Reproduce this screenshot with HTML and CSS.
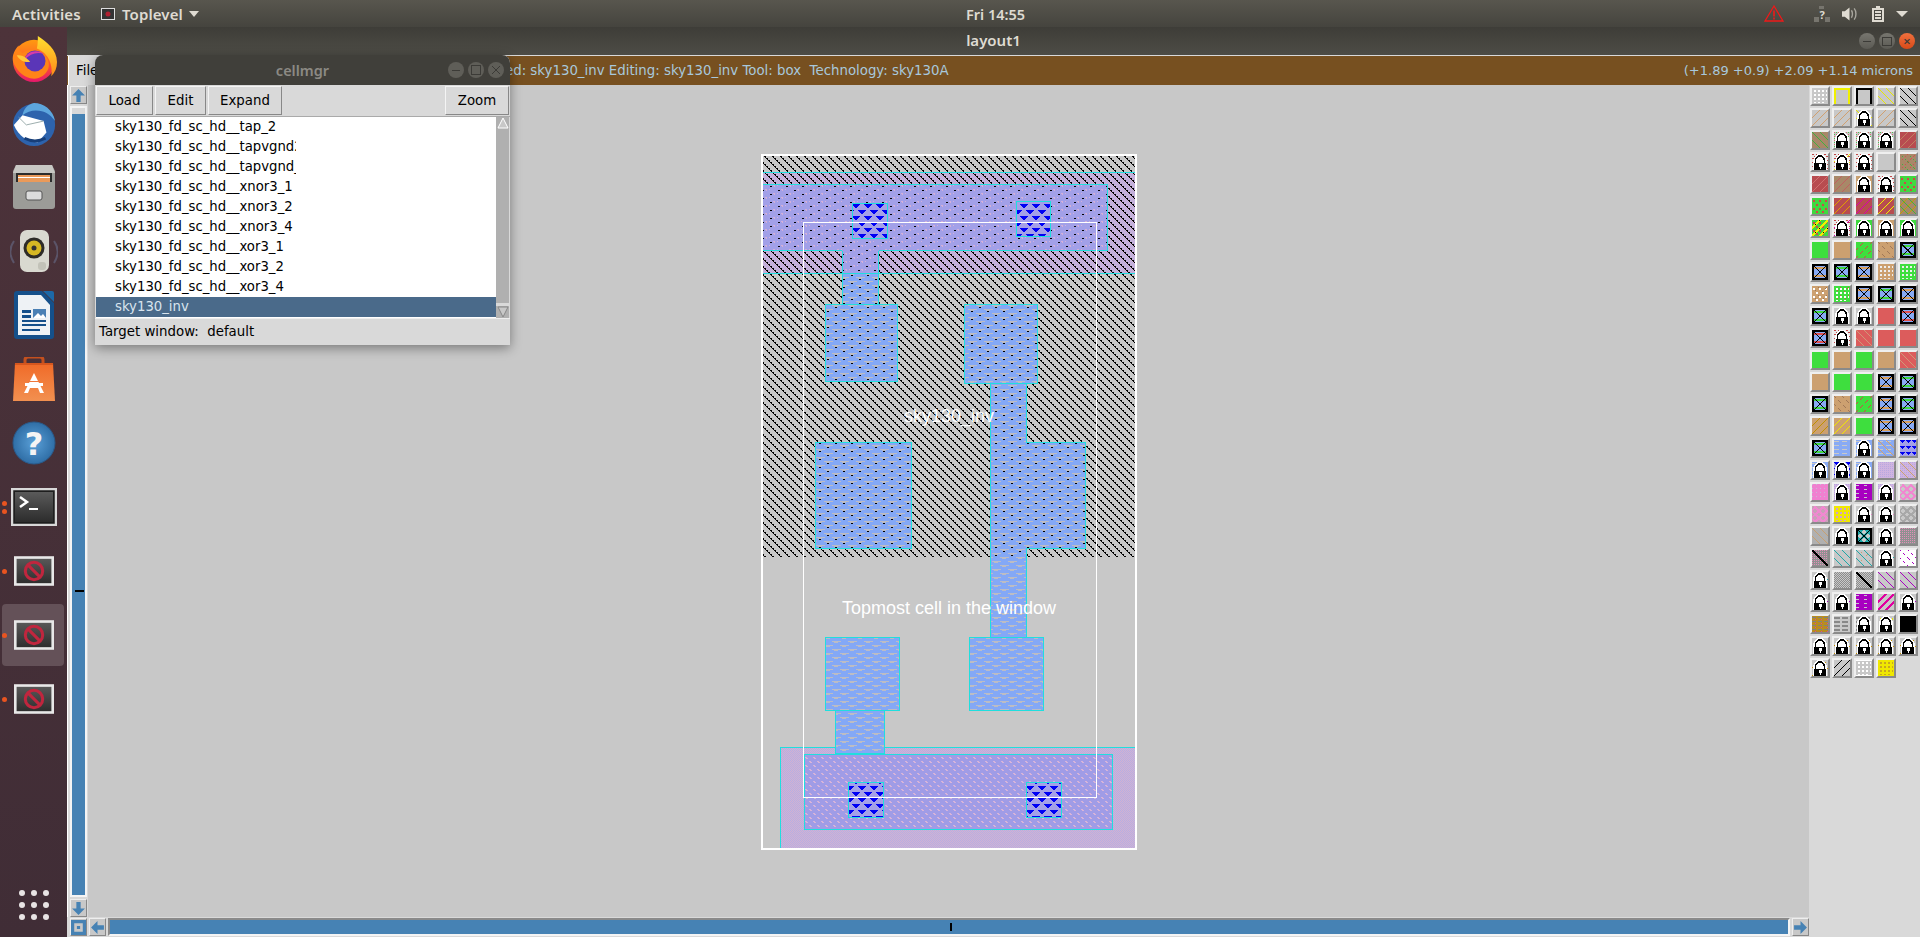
FILE: index.html
```html
<!DOCTYPE html>
<html lang="en">
<head>
<meta charset="utf-8">
<title>layout1</title>
<link rel="stylesheet" href="styles.css">
</head>
<body>
<svg class="defs" width="0" height="0" aria-hidden="true">
<defs>
<pattern id="pHatch" width="8" height="8" patternUnits="userSpaceOnUse"><path d="M0 0h2v1H0zM1 1h1v1H1zM2 2h2v1H2zM3 3h1v1H3zM4 4h2v1H4zM5 5h1v1H5zM6 6h2v1H6zM7 7h1v1H7z" fill="#000"/></pattern>
<pattern id="pPink" width="2" height="2" patternUnits="userSpaceOnUse"><rect width="2" height="2" fill="#d2b2d2"/><rect width="1" height="1" fill="#b6aee2"/><rect x="1" y="1" width="1" height="1" fill="#b6aee2"/></pattern>
<pattern id="pMetK" width="16" height="8" patternUnits="userSpaceOnUse"><rect width="16" height="8" fill="#a2a0e8"/><path d="M5 1h2v1H5zM13 5h2v1h-2zM1 5h1v1H1zM9 1h1v1H9zM6 2h1v1H6zM14 6h1v1h-1z" fill="#d4b0d8"/><path d="M2 2h2v1H2zM10 6h2v1h-2z" fill="#000"/></pattern>
<pattern id="pMet" width="8" height="8" patternUnits="userSpaceOnUse"><rect width="8" height="8" fill="#a09ce6"/><path d="M1 1h2v1H1zM2 2h2v1H2zM5 5h2v1H5zM6 6h2v1H6z" fill="#d8b4d8"/></pattern>
<pattern id="pBlue" width="16" height="8" patternUnits="userSpaceOnUse"><rect width="16" height="8" fill="#84a8f6"/><path d="M0 1h9v1H0zM8 5h8v1H8zM0 5h1v1H0zM2 2h4v1H2zM10 6h4v1h-4z" fill="#bcbcc4"/></pattern>
<pattern id="pBlueK" width="16" height="8" patternUnits="userSpaceOnUse"><rect width="16" height="8" fill="#84a8f6"/><path d="M0 1h9v1H0zM8 5h8v1H8zM0 5h1v1H0zM2 2h4v1H2zM10 6h4v1h-4z" fill="#bcbcc4"/><path d="M3 3h2v1H3zM11 7h2v1h-2z" fill="#000"/></pattern>
<pattern id="pCon" width="12" height="12" patternUnits="userSpaceOnUse"><rect width="12" height="12" fill="#a4a0e8"/><path d="M0 0h8v1H0zM1 1h6v1H1zM2 2h4v1H2zM3 3h2v1H3zM6 6h6v1H6zM0 6h2v1H0zM7 7h5v1H7zM0 7h1v1H0zM8 8h4v1H8zM9 9h2v1H9z" fill="#0000f4"/></pattern>
<pattern id="tPG" width="4" height="4" patternUnits="userSpaceOnUse"><rect width="4" height="4" fill="#c8c8c8"/><path d="M0 0h1v1H0zM2 2h1v1H2z" fill="#d07070"/><path d="M2 0h1v1H2zM0 2h1v1H0z" fill="#50c050"/></pattern>
<pattern id="tRW" width="4" height="4" patternUnits="userSpaceOnUse"><rect width="4" height="4" fill="#e8e8e8"/><path d="M0 0h2v1H0zM2 2h2v1H2z" fill="#c04848"/></pattern>
<pattern id="tPur" width="2" height="2" patternUnits="userSpaceOnUse"><rect width="2" height="2" fill="#d0b4e0"/><rect width="1" height="1" fill="#b8a8e0"/></pattern>
<pattern id="tGD" width="2" height="2" patternUnits="userSpaceOnUse"><rect width="2" height="2" fill="#8c8c8c"/><rect width="1" height="1" fill="#c8c8c8"/><rect x="1" y="1" width="1" height="1" fill="#c8c8c8"/></pattern>
<pattern id="tGP" width="2" height="2" patternUnits="userSpaceOnUse"><rect width="2" height="2" fill="#909090"/><rect width="1" height="1" fill="#e090b8"/></pattern>
<pattern id="tOc" width="6" height="4" patternUnits="userSpaceOnUse"><rect width="6" height="4" fill="#b88c20"/><rect y="1" width="4" height="1" fill="#808080"/><rect x="3" y="3" width="1" height="1" fill="#e040a0"/></pattern>
<pattern id="tGs" width="8" height="4" patternUnits="userSpaceOnUse"><rect width="8" height="4" fill="#c8c8c8"/><rect y="1" width="6" height="2" fill="#888"/></pattern>
<pattern id="tMs" width="8" height="4" patternUnits="userSpaceOnUse"><rect width="8" height="4" fill="#a800c0"/><rect y="1" width="3" height="1" fill="#c8c8c8"/></pattern>
<pattern id="tBs" width="8" height="4" patternUnits="userSpaceOnUse"><rect width="8" height="4" fill="#88aaf4"/><rect y="1" width="5" height="1" fill="#c8c8c8"/></pattern>
<pattern id="tBk" width="6" height="6" patternUnits="userSpaceOnUse"><rect width="6" height="6" fill="#a4a0e8"/><path d="M0 0h5v1H0zM1 1h3v1H1zM2 2h1v1H2z" fill="#0000f0"/></pattern>
<pattern id="tPk" width="4" height="4" patternUnits="userSpaceOnUse"><rect width="4" height="4" fill="#f080d0"/><rect width="1" height="1" fill="#c8b8d8"/></pattern>

<g id="s2" fill="none" stroke-width="1.2"><path d="M-1 9L9-1M-1 17L17-1M7 17L17 7"/></g>
<g id="b2" fill="none" stroke-width="1.2"><path d="M-1-1L17 17M7-1L17 9M-1 7L9 17"/></g>
<g id="s3" fill="none" stroke-width="2"><path d="M-1 9L9-1M-1 17L17-1M7 17L17 7"/></g>
<g id="dg"><path d="M1 2h2v2H1zM7 2h2v2H7zM13 2h2v2h-2zM4 6h2v2H4zM10 6h2v2h-2zM1 10h2v2H1zM7 10h2v2H7zM13 10h2v2h-2zM4 13h2v2H4zM10 13h2v2h-2z"/></g>
<g id="sq"><path d="M2 2h2v2H2zM6 2h2v2H6zM10 2h2v2h-2zM2 6h2v2H2zM6 6h2v2H6zM10 6h2v2h-2zM2 10h2v2H2zM6 10h2v2H6zM10 10h2v2h-2zM14 2h1v2h-1zM14 6h1v2h-1zM14 10h1v2h-1zM2 14h2v1H2zM6 14h2v1H6zM10 14h2v1h-2z"/></g>
<g id="L"><path d="M1 16V8C1 3 4 0 8 0s7 3 7 8v8z" fill="#fff"/><path d="M3.500 9V7C3.500 4 5.500 2 8 2s4.500 2 4.500 5v2" fill="none" stroke="#000" stroke-width="1.600"/><path d="M2 9h12v7H2z" fill="#000"/><path d="M6.500 10h3v2.500h-1V15h-1v-2.500h-1z" fill="#fff"/></g>
<g id="X"><rect x="1" y="1" width="14" height="14" fill="none" stroke="#000" stroke-width="1.500"/><path d="M1 1L15 15M15 1L1 15" stroke="#000" stroke-width="1.400"/></g>
<g id="rg"><path d="M3 1l4 4-4 4-3-4zM11 1l4 4-4 4-4-4zM3 8l4 4-4 4-3-4zM11 8l4 4-4 4-4-4z" fill="none" stroke-width="1.600"/></g>

<symbol id="wd" viewBox="0 0 16 16"><rect width="16" height="16" fill="#c8c8c8"/><use href="#sq" fill="#fff"/></symbol>
<symbol id="yb" viewBox="0 0 16 16"><rect width="16" height="16" fill="#c8c8c8"/><path d="M1 16V1h14v15" fill="none" stroke="#f0f000" stroke-width="1.500"/></symbol>
<symbol id="kb" viewBox="0 0 16 16"><rect width="16" height="16" fill="#c8c8c8"/><path d="M1 16V1h14v15" fill="none" stroke="#000" stroke-width="1.500"/></symbol>
<symbol id="yh" viewBox="0 0 16 16"><rect width="16" height="16" fill="#c8c8c8"/><use href="#b2" stroke="#e8e800"/></symbol>
<symbol id="kh" viewBox="0 0 16 16"><rect width="16" height="16" fill="#c8c8c8"/><use href="#b2" stroke="#000"/></symbol>
<symbol id="th" viewBox="0 0 16 16"><rect width="16" height="16" fill="#c8c8c8"/><use href="#s2" stroke="#d0a070"/></symbol>
<symbol id="ly" viewBox="0 0 16 16"><rect width="16" height="16" fill="#c8c8c8"/><use href="#b2" stroke="#e8e800"/><use href="#L" fill="#ddd"/></symbol>
<symbol id="bg" viewBox="0 0 16 16"><rect width="16" height="16" fill="#a88868"/><use href="#b2" stroke="#40b040"/></symbol>
<symbol id="lpg" viewBox="0 0 16 16"><rect width="16" height="16" fill="url(#tPG)"/><use href="#L"/></symbol>
<symbol id="rt" viewBox="0 0 16 16"><rect width="16" height="16" fill="#b84c50"/><use href="#s2" stroke="#c08060"/></symbol>
<symbol id="lr" viewBox="0 0 16 16"><rect width="16" height="16" fill="url(#tRW)"/><use href="#L"/></symbol>
<symbol id="lry" viewBox="0 0 16 16"><rect width="16" height="16" fill="url(#tRW)"/><use href="#s2" stroke="#e8e800"/><use href="#L"/></symbol>
<symbol id="pl" viewBox="0 0 16 16"><rect width="16" height="16" fill="#c8c8c8"/></symbol>
<symbol id="bd" viewBox="0 0 16 16"><rect width="16" height="16" fill="#a88868"/><use href="#b2" stroke="#40b040" stroke-dasharray="2 2"/><use href="#s2" stroke="#d05050" stroke-dasharray="2 2"/></symbol>
<symbol id="r1" viewBox="0 0 16 16"><rect width="16" height="16" fill="#b84c50"/><use href="#s2" stroke="#d07070"/></symbol>
<symbol id="b1" viewBox="0 0 16 16"><rect width="16" height="16" fill="#a88868"/><use href="#s2" stroke="#c06060"/></symbol>
<symbol id="lt" viewBox="0 0 16 16"><rect width="16" height="16" fill="#c8a070"/><use href="#L"/></symbol>
<symbol id="gr" viewBox="0 0 16 16"><rect width="16" height="16" fill="#40d840"/><use href="#dg" fill="#d04848"/></symbol>
<symbol id="ry" viewBox="0 0 16 16"><rect width="16" height="16" fill="#b84c50"/><use href="#s2" stroke="#e0a000"/></symbol>
<symbol id="rm" viewBox="0 0 16 16"><rect width="16" height="16" fill="#b84c50"/><use href="#s2" stroke="#d800b0"/></symbol>
<symbol id="ryb" viewBox="0 0 16 16"><rect width="16" height="16" fill="#b84c50"/><use href="#s2" stroke="#f0f000"/></symbol>
<symbol id="tg" viewBox="0 0 16 16"><rect width="16" height="16" fill="#a88868"/><use href="#s2" stroke="#c0a000"/><use href="#b2" stroke="#40b040"/></symbol>
<symbol id="gy" viewBox="0 0 16 16"><rect width="16" height="16" fill="#40d840"/><use href="#dg" fill="#d04848"/><use href="#s3" stroke="#f0f000"/><use href="#s2" stroke="#000" stroke-dasharray="1 5"/></symbol>
<symbol id="lm" viewBox="0 0 16 16"><rect width="16" height="16" fill="url(#tRW)"/><use href="#s2" stroke="#e000c0"/><use href="#L" fill="#ccc"/></symbol>
<symbol id="lg" viewBox="0 0 16 16"><rect width="16" height="16" fill="#40d840"/><use href="#L" fill="#60d060"/></symbol>
<symbol id="lto" viewBox="0 0 16 16"><rect width="16" height="16" fill="#c8a070"/><use href="#L" fill="#c08050"/></symbol>
<symbol id="G" viewBox="0 0 16 16"><rect width="16" height="16" fill="#3ede3e"/></symbol>
<symbol id="T" viewBox="0 0 16 16"><rect width="16" height="16" fill="#cca070"/></symbol>
<symbol id="g1" viewBox="0 0 16 16"><rect width="16" height="16" fill="#3ede3e"/><use href="#s2" stroke="#d04848" stroke-dasharray="4 3"/></symbol>
<symbol id="t2" viewBox="0 0 16 16"><rect width="16" height="16" fill="#cca070"/><use href="#b2" stroke="#a07858" stroke-dasharray="4 3"/></symbol>
<symbol id="xg" viewBox="0 0 16 16"><rect width="16" height="16" fill="#88aaf4"/><path d="M0 3h16v2H0zM0 11h16v2H0z" fill="#40d840"/><use href="#X"/></symbol>
<symbol id="xt" viewBox="0 0 16 16"><rect width="16" height="16" fill="#88aaf4"/><path d="M0 3h16v2H0zM0 11h16v2H0z" fill="#d8a060"/><use href="#X"/></symbol>
<symbol id="xr" viewBox="0 0 16 16"><rect width="16" height="16" fill="#88aaf4"/><path d="M0 3h16v2H0zM0 11h16v2H0z" fill="#e05050"/><use href="#X"/></symbol>
<symbol id="td" viewBox="0 0 16 16"><rect width="16" height="16" fill="#cca070"/><use href="#sq" fill="#eee"/></symbol>
<symbol id="gd" viewBox="0 0 16 16"><rect width="16" height="16" fill="#3ede3e"/><use href="#sq" fill="#eee"/></symbol>
<symbol id="tr" viewBox="0 0 16 16"><rect width="16" height="16" fill="#cca070"/><use href="#dg" fill="#fff"/><use href="#s2" stroke="#a07858" stroke-dasharray="2 3"/></symbol>
<symbol id="gw" viewBox="0 0 16 16"><rect width="16" height="16" fill="#3ede3e"/><use href="#sq" fill="#fff"/><use href="#s2" stroke="#d04848" stroke-dasharray="2 3"/></symbol>
<symbol id="lw" viewBox="0 0 16 16"><rect width="16" height="16" fill="#c8c8c8"/><use href="#L" fill="#ddd"/></symbol>
<symbol id="S" viewBox="0 0 16 16"><rect width="16" height="16" fill="#dc5c5c"/></symbol>
<symbol id="st" viewBox="0 0 16 16"><rect width="16" height="16" fill="#dc5c5c"/><use href="#b2" stroke="#d09878"/></symbol>
<symbol id="to" viewBox="0 0 16 16"><rect width="16" height="16" fill="#cca070"/><use href="#s2" stroke="#c09000"/></symbol>
<symbol id="tb" viewBox="0 0 16 16"><rect width="16" height="16" fill="#cca070"/><use href="#s2" stroke="#f0e800"/></symbol>
<symbol id="bs" viewBox="0 0 16 16"><rect width="16" height="16" fill="url(#tBs)"/></symbol>
<symbol id="lb" viewBox="0 0 16 16"><rect width="16" height="16" fill="url(#tBs)"/><use href="#L" fill="#88aaf4"/></symbol>
<symbol id="bt" viewBox="0 0 16 16"><rect width="16" height="16" fill="url(#tBs)"/><use href="#b2" stroke="#d0a070"/></symbol>
<symbol id="bk" viewBox="0 0 16 16"><rect width="16" height="16" fill="url(#tBk)"/></symbol>
<symbol id="ld" viewBox="0 0 16 16"><rect width="16" height="16" fill="url(#tBk)"/><use href="#L" fill="#5050e0"/></symbol>
<symbol id="pp" viewBox="0 0 16 16"><rect width="16" height="16" fill="url(#tPur)"/></symbol>
<symbol id="pt" viewBox="0 0 16 16"><rect width="16" height="16" fill="url(#tPur)"/><use href="#b2" stroke="#c8a070"/></symbol>
<symbol id="pk" viewBox="0 0 16 16"><rect width="16" height="16" fill="url(#tPk)"/></symbol>
<symbol id="lp" viewBox="0 0 16 16"><rect width="16" height="16" fill="url(#tPur)"/><use href="#L" fill="#c8a0d8"/></symbol>
<symbol id="ps" viewBox="0 0 16 16"><rect width="16" height="16" fill="url(#tMs)"/></symbol>
<symbol id="pr" viewBox="0 0 16 16"><rect width="16" height="16" fill="#c8c8c8"/><use href="#rg" stroke="#f088d0"/></symbol>
<symbol id="pr2" viewBox="0 0 16 16"><rect width="16" height="16" fill="#c8a0b8"/><use href="#rg" stroke="#f088d0"/></symbol>
<symbol id="yp" viewBox="0 0 16 16"><rect width="16" height="16" fill="#f0e800"/><use href="#sq" fill="#d0a0d0"/></symbol>
<symbol id="lk" viewBox="0 0 16 16"><rect width="16" height="16" fill="#c8c8c8"/><use href="#s2" stroke="#e080c0" stroke-dasharray="2 4"/><use href="#L" fill="#e0a0c8"/></symbol>
<symbol id="gyr" viewBox="0 0 16 16"><rect width="16" height="16" fill="#c8c8c8"/><use href="#rg" stroke="#a8a8a8"/></symbol>
<symbol id="gt" viewBox="0 0 16 16"><rect width="16" height="16" fill="#b0b0b0"/><use href="#b2" stroke="#c8a070"/></symbol>
<symbol id="xq" viewBox="0 0 16 16"><rect width="16" height="16" fill="#c8c8c8"/><path d="M-1 9L9-1M-1 17L17-1M7 17L17 7M-1-1L17 17M7-1L17 9M-1 7L9 17" stroke="#20a8a8" stroke-width="1.500" fill="none"/><use href="#X"/></symbol>
<symbol id="gp" viewBox="0 0 16 16"><rect width="16" height="16" fill="url(#tGP)"/></symbol>
<symbol id="kgp" viewBox="0 0 16 16"><rect width="16" height="16" fill="url(#tGP)"/><path d="M0 0L16 16" stroke="#000" stroke-width="2"/></symbol>
<symbol id="qh" viewBox="0 0 16 16"><rect width="16" height="16" fill="#c8c8c8"/><use href="#b2" stroke="#20a8a8" stroke-width="1.800"/></symbol>
<symbol id="qt" viewBox="0 0 16 16"><rect width="16" height="16" fill="#c8c8c8"/><use href="#b2" stroke="#20a8a8"/><use href="#s2" stroke="#c8a070" stroke-dasharray="2 6"/></symbol>
<symbol id="lq" viewBox="0 0 16 16"><rect width="16" height="16" fill="#c8c8c8"/><use href="#b2" stroke="#20a8a8" stroke-dasharray="2 4"/><use href="#L" fill="#a0d0d0"/></symbol>
<symbol id="mw" viewBox="0 0 16 16"><rect width="16" height="16" fill="#fff"/><use href="#b2" stroke="#a800c0" stroke-dasharray="3 3" stroke-width="2"/></symbol>
<symbol id="dg2" viewBox="0 0 16 16"><rect width="16" height="16" fill="url(#tGD)"/></symbol>
<symbol id="kdg" viewBox="0 0 16 16"><rect width="16" height="16" fill="url(#tGD)"/><path d="M0 0L16 16" stroke="#000" stroke-width="1.500"/></symbol>
<symbol id="ph" viewBox="0 0 16 16"><rect width="16" height="16" fill="#c8c8c8"/><use href="#b2" stroke="#a800c0" stroke-width="1.800"/></symbol>
<symbol id="lmg" viewBox="0 0 16 16"><rect width="16" height="16" fill="#c8c8c8"/><use href="#b2" stroke="#a800c0" stroke-dasharray="2 4"/><use href="#L" fill="#d0a0e0"/></symbol>
<symbol id="md" viewBox="0 0 16 16"><rect width="16" height="16" fill="#c8c8c8"/><use href="#s3" stroke="#e000a0"/></symbol>
<symbol id="oc" viewBox="0 0 16 16"><rect width="16" height="16" fill="url(#tOc)"/></symbol>
<symbol id="gs" viewBox="0 0 16 16"><rect width="16" height="16" fill="url(#tGs)"/></symbol>
<symbol id="lgs" viewBox="0 0 16 16"><rect width="16" height="16" fill="url(#tGs)"/><use href="#L" fill="#bbb"/></symbol>
<symbol id="lyl" viewBox="0 0 16 16"><rect width="16" height="16" fill="#c8c8c8"/><use href="#sq" fill="#e8e800"/><use href="#L" fill="#e0e070"/></symbol>
<symbol id="K" viewBox="0 0 16 16"><rect width="16" height="16" fill="#000"/></symbol>
<symbol id="lo" viewBox="0 0 16 16"><rect width="16" height="16" fill="#c8c8c8"/><use href="#s2" stroke="#c89000" stroke-dasharray="3 3"/><use href="#L" fill="#d8c0a0"/></symbol>
<symbol id="k2" viewBox="0 0 16 16"><rect width="16" height="16" fill="#c8c8c8"/><use href="#s2" stroke="#000"/></symbol>
<symbol id="yd" viewBox="0 0 16 16"><rect width="16" height="16" fill="#f0e800"/><use href="#sq" fill="#c8a820"/></symbol>
<symbol id="wd2" viewBox="0 0 16 16"><rect width="16" height="16" fill="#c8c8c8"/><use href="#sq" fill="#fff"/><path d="M0 0h16v1H0zM0 15h16v1H0z" fill="#fff"/></symbol>

<linearGradient id="gFox" x1="0" y1="0" x2="0" y2="1"><stop offset="0" stop-color="#ff9a10"/><stop offset=".55" stop-color="#ff5a28"/><stop offset="1" stop-color="#e6186c"/></linearGradient>
<linearGradient id="gFlame" x1="0" y1="0" x2="0" y2="1"><stop offset="0" stop-color="#ffe030"/><stop offset="1" stop-color="#ff8a18"/></linearGradient>
<linearGradient id="gBag" x1="0" y1="0" x2="0" y2="1"><stop offset="0" stop-color="#f06a28"/><stop offset="1" stop-color="#f29050"/></linearGradient>
<radialGradient id="gHelp"><stop offset="0" stop-color="#5aa0d8"/><stop offset="1" stop-color="#2f6ea6"/></radialGradient>
<linearGradient id="gDark" x1="0" y1="0" x2="0" y2="1"><stop offset="0" stop-color="#5a5a5a"/><stop offset="1" stop-color="#2c2c2c"/></linearGradient>
<symbol id="nope" viewBox="0 0 46 34"><rect x="1.500" y="1.500" width="43" height="31" fill="url(#gDark)" stroke="#e8e8e8" stroke-width="3"/><circle cx="23" cy="17" r="10" fill="none" stroke="#c0263e" stroke-width="3.500"/><path d="M16 10l14 14" stroke="#c0263e" stroke-width="3.500"/></symbol>
</defs>
</svg>

<header class="topbar">
  <div class="top-left">
    <span class="activities">Activities</span>
    <svg class="app-mini" viewBox="0 0 14 12"><rect x=".5" y=".5" width="13" height="11" fill="#333" stroke="#ddd"/><circle cx="7" cy="6" r="2.500" fill="#b02030"/></svg>
    <span class="app-name">Toplevel</span>
    <span class="caret"></span>
  </div>
  <span class="clock">Fri 14:55</span>
  <div class="tray">
    <svg class="tray-warn" viewBox="0 0 20 17"><path d="M10 1L19 16H1z" fill="none" stroke="#f01818" stroke-width="1.300"/><path d="M9.200 5.500h1.600v6H9.200zM9.200 12.500h1.600v2H9.200z" fill="#f01818"/></svg>
    <svg class="tray-net" viewBox="0 0 16 16"><path d="M0 11h5v5H0zM11 11h5v5h-5zM5 0h5v3H5z" fill="#77756e"/><text x="8" y="13" class="tray-q">?</text></svg>
    <svg class="tray-snd" viewBox="0 0 16 14"><path d="M0 4h3l5-4v14l-5-4H0z" fill="#dfdbd2"/><path d="M10 3c1.500 2 1.500 6 0 8M13 1c2.500 3 2.500 9 0 12" fill="none" stroke="#a8a69e" stroke-width="1.500"/></svg>
    <svg class="tray-bat" viewBox="0 0 12 16"><path d="M4 0h4v2h4v14H0V2h4z" fill="#dfdbd2"/><path d="M2 4h8v10H2z" fill="#4a4943"/><path d="M3 5h6v2H3zM3 8h6v2H3zM3 11h6v2H3z" fill="#dfdbd2"/></svg>
    <span class="caret caret-tray"></span>
  </div>
</header>

<div class="desktop">
  <nav class="dock">
    <div class="dock-item">
      <svg class="dock-icon" viewBox="0 0 48 48"><circle cx="24" cy="26" r="22" fill="url(#gFox)"/><path d="M28 0c9 6 20 14 20 27 0 6-2 11-6 15 2-10-2-24-15-29 1-4 1-9 1-13z" fill="url(#gFlame)"/><path d="M2 26C1 20 4 14 8 10c0 3 1 6 4 8 4-4 12-5 18-2 7 3 11 11 9 18-3 8-11 12-19 10C12 42 5 35 2 26z" fill="#ff8418"/><circle cx="25" cy="26" r="11" fill="#5a36b8"/><path d="M14 25c2-9 13-12 21-6-7-3-15-1-21 6z" fill="#d83ca8"/><path d="M6 20c6 0 10 2 14 7-5 1-11-1-14-7z" fill="#ffc83a"/></svg>
    </div>
    <div class="dock-item">
      <svg class="dock-icon" viewBox="0 0 48 48"><circle cx="24" cy="26" r="22" fill="#2d63ad"/><path d="M24 3c10 0 20 7 22 19-5-7-11-11-20-11-5 0-10 2-14 5C13 9 18 4 24 3z" fill="#5da6dd"/><path d="M3 26l9-10 22 6 3 12-9 10C18 44 8 38 3 26z" fill="#fff"/><path d="M8 18l8 8 18-4" fill="none" stroke="#9aa" stroke-width="1"/><path d="M14 40c6 3 14 4 22 0" stroke="#173e78" stroke-width="3" fill="none"/></svg>
    </div>
    <div class="dock-item">
      <svg class="dock-icon dock-files" viewBox="0 0 42 44"><path d="M3 0h36l3 6v35q0 3-3 3H3q-3 0-3-3V6z" fill="#9c9c98"/><path d="M3 0h36l3 8H0z" fill="#c8c8c4"/><rect x="3" y="8" width="36" height="9" fill="#2c2c2c"/><rect x="5" y="10" width="32" height="7" fill="#ea9a5a"/><path d="M5 12h32v1H5z" fill="#fff"/><rect x="13" y="26" width="16" height="9" rx="2" fill="#dcdcdc" stroke="#555"/></svg>
    </div>
    <div class="dock-item">
      <svg class="dock-icon dock-spk" viewBox="0 0 48 48"><path d="M4 14c-5 7-5 14 0 22M44 14c5 7 5 14 0 22" fill="none" stroke="#5b5468" stroke-width="2"/><rect x="10" y="3" width="29" height="42" rx="7" fill="#d9d9d0"/><circle cx="24" cy="21" r="10.500" fill="#2e2c28"/><circle cx="24" cy="21" r="7.500" fill="#d6b824"/><circle cx="24" cy="21" r="2.500" fill="#333"/><rect x="28" y="35" width="8" height="8" rx="3" fill="#c2c2b8"/></svg>
    </div>
    <div class="dock-item">
      <svg class="dock-icon dock-doc" viewBox="0 0 40 48"><path d="M3 0h25L40 12v33q0 3-3 3H3q-3 0-3-3V3q0-3 3-3z" fill="#15508a"/><path d="M29 0h9q2 0 2 2v9z" fill="#1c69a8"/><path d="M4 4h23l9 10v30H4z" fill="#eef2f5"/><path d="M8 19h9v3H8zM8 24h9v3H8zM8 29h24v2H8zM8 33h24v2H8zM8 38h18v2H8z" fill="#15508a"/><rect x="19" y="18" width="13" height="9" fill="#4a80b4"/><path d="M19 27l5-5 3 3 2-2 3 4z" fill="#fff"/></svg>
    </div>
    <div class="dock-item">
      <svg class="dock-icon dock-bag" viewBox="0 0 42 44"><path d="M12 8V3q0-3 3-3h12q3 0 3 3v5" fill="none" stroke="#c4501e" stroke-width="3"/><path d="M2 6h38l2 38H0z" fill="url(#gBag)"/><path d="M2 6h38v2H2z" fill="#d6561e"/><path d="M21 16l10 20h-4l-2-5h-8l-2 5H11z" fill="#fff"/><path d="M12 26h18v3H12z" fill="#fff"/><path d="M15 24h12v1H15z" fill="#f0783a"/></svg>
    </div>
    <div class="dock-item">
      <svg class="dock-icon dock-help" viewBox="0 0 44 44"><circle cx="22" cy="22" r="21" fill="url(#gHelp)" stroke="#2a5a8a"/><text x="22" y="34" class="help-q">?</text></svg>
    </div>
    <div class="dock-item">
      <span class="run-dots"><i></i><i></i></span>
      <svg class="dock-icon dock-term" viewBox="0 0 46 38"><rect x="1" y="1" width="44" height="36" fill="#1e1e1e" stroke="#d8d8d8" stroke-width="2.500"/><rect x="4" y="4" width="38" height="30" fill="url(#gDark)"/><path d="M9 9l7 5-7 5" fill="none" stroke="#fff" stroke-width="2.500"/><path d="M18 20h9v2h-9z" fill="#fff"/></svg>
    </div>
    <div class="dock-item">
      <span class="run-dots"><i></i></span>
      <svg class="dock-icon dock-nope"><use href="#nope"/></svg>
    </div>
    <div class="dock-item dock-active">
      <span class="run-dots"><i></i></span>
      <svg class="dock-icon dock-nope"><use href="#nope"/></svg>
    </div>
    <div class="dock-item">
      <span class="run-dots"><i></i></span>
      <svg class="dock-icon dock-nope"><use href="#nope"/></svg>
    </div>
    <div class="dock-grid"><i></i><i></i><i></i><i></i><i></i><i></i><i></i><i></i><i></i></div>
  </nav>

  <main class="window">
    <div class="titlebar">
      <span class="title-text">layout1</span>
      <div class="wm-buttons">
        <span class="wm-btn wm-min"></span>
        <span class="wm-btn wm-max"></span>
        <span class="wm-btn wm-close">×</span>
      </div>
    </div>

    <div class="statusbar">
      <span class="file-menu">File</span>
      <span class="status-left">Loaded: sky130_inv Editing: sky130_inv Tool: box&nbsp; Technology: sky130A</span>
      <span class="status-right">(+1.89 +0.9) +2.09 +1.14 microns</span>
    </div>

    <div class="workspace">
      <div class="work-left">
        <div class="work-top">
          <div class="vscroll">
            <span class="sbtn"><svg viewBox="0 0 14 14"><path d="M7 1l6 6H9v6H5V7H1z" fill="#4682b4"/></svg></span>
            <div class="vtrough"><div class="vthumb"><b class="vtick"></b></div></div>
            <span class="sbtn"><svg viewBox="0 0 14 14"><path d="M7 13L1 7h4V1h4v6h4z" fill="#4682b4"/></svg></span>
          </div>
          <div class="canvas">
            <svg class="layout" width="1721" height="832" viewBox="88 85 1721 832">
              <rect x="763" y="156" width="372" height="401" fill="url(#pHatch)"/>
              <rect x="763" y="172" width="372" height="101" fill="url(#pPink)"/>
              <rect x="763" y="172" width="372" height="101" fill="url(#pHatch)"/>
              <path d="M763 172.500h372M763 273.500h372" class="cy"/>
              <rect x="780.500" y="747.500" width="354" height="100" fill="url(#pPink)"/>
              <path d="M1135 747.500H780.500V848" class="cy"/>

              <rect x="763" y="184.500" width="344.500" height="66" fill="url(#pMetK)"/>
              <path d="M763 184.500h344.500v66H879M842 250.500H763" class="cy"/>
              <path d="M842.500 251v53M878.500 251v53" class="cy"/>
              <rect x="843" y="251" width="35" height="22" fill="url(#pMetK)"/>
              <rect x="843" y="274" width="35" height="30" fill="url(#pBlueK)"/>
              <path d="M842.500 273.500h36" class="cy"/>
              <rect class="shape" x="852.500" y="203.500" width="35" height="35" fill="url(#pCon)"/>
              <rect class="shape" x="1016.500" y="201.500" width="34" height="35" fill="url(#pCon)"/>

              <rect class="shape" x="825.500" y="304.500" width="72" height="77" fill="url(#pBlueK)"/>
              <rect class="shape" x="964.500" y="304.500" width="73" height="79" fill="url(#pBlueK)"/>
              <rect class="shape" x="990.500" y="383.500" width="36" height="58" fill="url(#pBlueK)"/>
              <rect class="shape" x="815.500" y="442.500" width="96" height="106" fill="url(#pBlueK)"/>
              <rect class="shape" x="990.500" y="442.500" width="95" height="106" fill="url(#pBlueK)"/>
              <rect x="991" y="440" width="35" height="4" fill="url(#pBlueK)"/>
              <rect x="991" y="547" width="35" height="11" fill="url(#pBlueK)"/>
              <rect x="991" y="558" width="35" height="79" fill="url(#pBlue)"/>
              <path d="M990.500 548v89M1026.500 548v89" class="cy"/>

              <rect class="shape" x="825.500" y="637.500" width="74" height="73" fill="url(#pBlue)"/>
              <rect class="shape" x="969.500" y="637.500" width="74" height="73" fill="url(#pBlue)"/>
              <rect class="shape" x="835.500" y="710.500" width="49" height="43" fill="url(#pBlue)"/>

              <rect class="shape" x="804.500" y="754.500" width="308" height="75" fill="url(#pMet)"/>
              <rect class="shape" x="848.500" y="782.500" width="35" height="35" fill="url(#pCon)"/>
              <rect class="shape" x="1026.500" y="782.500" width="35" height="35" fill="url(#pCon)"/>

              <rect class="cellbox" x="803.500" y="222.500" width="293" height="575"/>
              <rect class="bbox" x="762" y="155" width="374" height="694"/>
              <text class="lbl" x="949" y="422">sky130_inv</text>
              <text class="lbl" x="949" y="614">Topmost cell in the window</text>
            </svg>
          </div>
        </div>
        <div class="hscroll">
          <span class="sbtn"><svg viewBox="0 0 14 14"><path d="M0 0h14v14H0zM3 3v8h8V3zM5.500 5.500h3v3h-3z" fill="#4682b4" fill-rule="evenodd"/></svg></span>
          <span class="sbtn"><svg viewBox="0 0 14 14"><path d="M1 7l6-6v4h6v4H7v4z" fill="#4682b4"/></svg></span>
          <div class="htrough"><div class="hthumb"><b class="htick"></b></div></div>
          <span class="sbtn"><svg viewBox="0 0 14 14"><path d="M13 7L7 1v4H1v4h6v4z" fill="#4682b4"/></svg></span>
        </div>
      </div>

      <aside class="tiles">
        <svg class="t"><use href="#wd"/></svg><svg class="t"><use href="#yb"/></svg><svg class="t"><use href="#kb"/></svg><svg class="t"><use href="#yh"/></svg><svg class="t"><use href="#kh"/></svg>
        <svg class="t"><use href="#th"/></svg><svg class="t"><use href="#th"/></svg><svg class="t"><use href="#ly"/></svg><svg class="t"><use href="#th"/></svg><svg class="t"><use href="#kh"/></svg>
        <svg class="t"><use href="#bg"/></svg><svg class="t"><use href="#lpg"/></svg><svg class="t"><use href="#lpg"/></svg><svg class="t"><use href="#lpg"/></svg><svg class="t"><use href="#rt"/></svg>
        <svg class="t"><use href="#lr"/></svg><svg class="t"><use href="#lry"/></svg><svg class="t"><use href="#lr"/></svg><svg class="t"><use href="#pl"/></svg><svg class="t"><use href="#bd"/></svg>
        <svg class="t"><use href="#r1"/></svg><svg class="t"><use href="#b1"/></svg><svg class="t"><use href="#lt"/></svg><svg class="t"><use href="#lr"/></svg><svg class="t"><use href="#gr"/></svg>
        <svg class="t"><use href="#gr"/></svg><svg class="t"><use href="#ry"/></svg><svg class="t"><use href="#rm"/></svg><svg class="t"><use href="#ryb"/></svg><svg class="t"><use href="#tg"/></svg>
        <svg class="t"><use href="#gy"/></svg><svg class="t"><use href="#lm"/></svg><svg class="t"><use href="#lg"/></svg><svg class="t"><use href="#lto"/></svg><svg class="t"><use href="#lg"/></svg>
        <svg class="t"><use href="#G"/></svg><svg class="t"><use href="#T"/></svg><svg class="t"><use href="#g1"/></svg><svg class="t"><use href="#t2"/></svg><svg class="t"><use href="#xg"/></svg>
        <svg class="t"><use href="#xt"/></svg><svg class="t"><use href="#xg"/></svg><svg class="t"><use href="#xt"/></svg><svg class="t"><use href="#td"/></svg><svg class="t"><use href="#gd"/></svg>
        <svg class="t"><use href="#tr"/></svg><svg class="t"><use href="#gw"/></svg><svg class="t"><use href="#xt"/></svg><svg class="t"><use href="#xg"/></svg><svg class="t"><use href="#xt"/></svg>
        <svg class="t"><use href="#xg"/></svg><svg class="t"><use href="#lw"/></svg><svg class="t"><use href="#lw"/></svg><svg class="t"><use href="#S"/></svg><svg class="t"><use href="#xr"/></svg>
        <svg class="t"><use href="#xr"/></svg><svg class="t"><use href="#lr"/></svg><svg class="t"><use href="#st"/></svg><svg class="t"><use href="#S"/></svg><svg class="t"><use href="#S"/></svg>
        <svg class="t"><use href="#G"/></svg><svg class="t"><use href="#T"/></svg><svg class="t"><use href="#G"/></svg><svg class="t"><use href="#T"/></svg><svg class="t"><use href="#st"/></svg>
        <svg class="t"><use href="#T"/></svg><svg class="t"><use href="#G"/></svg><svg class="t"><use href="#G"/></svg><svg class="t"><use href="#xt"/></svg><svg class="t"><use href="#xg"/></svg>
        <svg class="t"><use href="#xg"/></svg><svg class="t"><use href="#t2"/></svg><svg class="t"><use href="#g1"/></svg><svg class="t"><use href="#xt"/></svg><svg class="t"><use href="#xg"/></svg>
        <svg class="t"><use href="#to"/></svg><svg class="t"><use href="#tb"/></svg><svg class="t"><use href="#G"/></svg><svg class="t"><use href="#xt"/></svg><svg class="t"><use href="#xt"/></svg>
        <svg class="t"><use href="#xg"/></svg><svg class="t"><use href="#bs"/></svg><svg class="t"><use href="#lb"/></svg><svg class="t"><use href="#bt"/></svg><svg class="t"><use href="#bk"/></svg>
        <svg class="t"><use href="#lb"/></svg><svg class="t"><use href="#ld"/></svg><svg class="t"><use href="#lb"/></svg><svg class="t"><use href="#pp"/></svg><svg class="t"><use href="#pt"/></svg>
        <svg class="t"><use href="#pk"/></svg><svg class="t"><use href="#lp"/></svg><svg class="t"><use href="#ps"/></svg><svg class="t"><use href="#lp"/></svg><svg class="t"><use href="#pr"/></svg>
        <svg class="t"><use href="#pr2"/></svg><svg class="t"><use href="#yp"/></svg><svg class="t"><use href="#lk"/></svg><svg class="t"><use href="#lk"/></svg><svg class="t"><use href="#gyr"/></svg>
        <svg class="t"><use href="#gt"/></svg><svg class="t"><use href="#lw"/></svg><svg class="t"><use href="#xq"/></svg><svg class="t"><use href="#lw"/></svg><svg class="t"><use href="#gp"/></svg>
        <svg class="t"><use href="#kgp"/></svg><svg class="t"><use href="#qh"/></svg><svg class="t"><use href="#qt"/></svg><svg class="t"><use href="#lq"/></svg><svg class="t"><use href="#mw"/></svg>
        <svg class="t"><use href="#lq"/></svg><svg class="t"><use href="#dg2"/></svg><svg class="t"><use href="#kdg"/></svg><svg class="t"><use href="#ph"/></svg><svg class="t"><use href="#ph"/></svg>
        <svg class="t"><use href="#lmg"/></svg><svg class="t"><use href="#lmg"/></svg><svg class="t"><use href="#ps"/></svg><svg class="t"><use href="#md"/></svg><svg class="t"><use href="#lmg"/></svg>
        <svg class="t"><use href="#oc"/></svg><svg class="t"><use href="#gs"/></svg><svg class="t"><use href="#lgs"/></svg><svg class="t"><use href="#lyl"/></svg><svg class="t"><use href="#K"/></svg>
        <svg class="t"><use href="#lw"/></svg><svg class="t"><use href="#lo"/></svg><svg class="t"><use href="#lo"/></svg><svg class="t"><use href="#lo"/></svg><svg class="t"><use href="#lo"/></svg>
        <svg class="t"><use href="#lo"/></svg><svg class="t"><use href="#k2"/></svg><svg class="t"><use href="#wd2"/></svg><svg class="t"><use href="#yd"/></svg>
      </aside>
    </div>
  </main>
</div>

<section class="cellmgr">
  <div class="cm-title">
    <span class="cm-title-text">cellmgr</span>
    <div class="cm-wm"><span class="cm-dot cm-min"></span><span class="cm-dot cm-max"></span><span class="cm-dot cm-x"></span></div>
  </div>
  <div class="cm-tools">
    <button class="tk-btn btn-load">Load</button>
    <button class="tk-btn btn-edit">Edit</button>
    <button class="tk-btn btn-expand">Expand</button>
    <button class="tk-btn btn-zoom">Zoom</button>
  </div>
  <div class="cm-list-wrap">
    <ul class="cm-list">
      <li>sky130_fd_sc_hd__tap_2</li>
      <li>sky130_fd_sc_hd__tapvgnd2_1</li>
      <li>sky130_fd_sc_hd__tapvgnd_1</li>
      <li>sky130_fd_sc_hd__xnor3_1</li>
      <li>sky130_fd_sc_hd__xnor3_2</li>
      <li>sky130_fd_sc_hd__xnor3_4</li>
      <li>sky130_fd_sc_hd__xor3_1</li>
      <li>sky130_fd_sc_hd__xor3_2</li>
      <li>sky130_fd_sc_hd__xor3_4</li>
      <li class="sel">sky130_inv</li>
    </ul>
    <div class="cm-scroll">
      <svg class="cm-arrow" viewBox="0 0 12 12"><path d="M6 1l5 10H1z" fill="#c8c8c8" stroke="#fff"/></svg>
      <div class="cm-track"></div>
      <svg class="cm-arrow" viewBox="0 0 12 12"><path d="M6 11L1 1h10z" fill="#c8c8c8" stroke="#888"/></svg>
    </div>
  </div>
  <div class="cm-target">Target window:&nbsp; default</div>
</section>
</body>
</html>
```
FILE: styles.css
```css
* { box-sizing: border-box; }
html, body { margin: 0; height: 937px; overflow: hidden; }
body { position: relative; width: 1920px; background: #3c3b37; font-family: "DejaVu Sans", sans-serif; display: flex; flex-direction: column; }
.defs { position: absolute; }

.topbar { flex: 0 0 27px; display: flex; align-items: center; background: linear-gradient(#58564e, #45443e); color: #dfdbd2; font-family: "Noto Sans", sans-serif; font-weight: 600; font-size: 15px; }
.top-left { flex: 0 0 966px; display: flex; align-items: center; padding-left: 12px; }
.activities { width: 89px; letter-spacing: .2px; }
.app-mini { width: 14px; height: 12px; margin-right: 7px; }
.app-name { letter-spacing: .1px; }
.caret { width: 0; height: 0; margin-left: 6px; border: 5px solid transparent; border-top: 6px solid #dfdbd2; border-bottom: 0; }
.clock { flex: 0 0 auto; font-size: 14.500px; }
.tray { flex: 1; display: flex; align-items: center; justify-content: flex-end; padding-right: 12px; }
.tray-warn { width: 20px; height: 17px; margin-right: 30px; }
.tray-net { width: 16px; height: 16px; margin-right: 12px; }
.tray-q { font: 700 11px "Noto Sans", sans-serif; fill: #dfdbd2; text-anchor: middle; }
.tray-snd { width: 15px; height: 14px; margin-right: 15px; }
.tray-bat { width: 12px; height: 16px; margin-right: 12px; }
.caret-tray { margin-left: 0; border-width: 6px 6.500px 0; border-top-color: #dfdbd2; border-top-style: solid; }

.desktop { flex: 1; display: flex; min-height: 0; }

.dock { flex: 0 0 67px; background: linear-gradient(#4d333a, #402d36); display: flex; flex-direction: column; }
.dock-item { flex: 0 0 64px; position: relative; display: flex; align-items: center; justify-content: center; }
.dock-icon { width: 46px; height: 46px; }
.dock-files { width: 42px; height: 44px; }
.dock-spk { width: 48px; height: 48px; }
.dock-doc { width: 40px; height: 48px; }
.dock-bag { width: 42px; height: 44px; }
.dock-help { width: 44px; height: 44px; }
.dock-term { width: 46px; height: 38px; }
.dock-nope { width: 40px; height: 32px; }
.dock-active::before { content: ""; position: absolute; left: 2px; right: 3px; top: 1px; bottom: 1px; border-radius: 4px; background: #645158; }
.dock-active .dock-icon { position: relative; }
.run-dots { position: absolute; left: 2px; top: 0; bottom: 0; display: flex; flex-direction: column; justify-content: center; gap: 3px; }
.run-dots i { display: block; width: 5px; height: 5px; border-radius: 50%; background: #e95420; position: relative; }
.dock-grid { margin-top: auto; margin-bottom: 17px; align-self: center; display: grid; grid-template-columns: repeat(3, 6px); gap: 6px; }
.dock-grid i { display: block; width: 6px; height: 6px; border-radius: 50%; background: #e8e4e4; }

.window { flex: 1; min-width: 0; display: flex; flex-direction: column; background: #d9d9d9; }
.titlebar { flex: 0 0 28px; position: relative; display: flex; align-items: center; justify-content: center; padding-bottom: 2px; background: linear-gradient(#3e3d38, #4d4c46); color: #dfdbd2; font-family: "Noto Sans", sans-serif; font-weight: 600; font-size: 15px; }
.wm-buttons { position: absolute; right: 5px; top: 6px; display: flex; gap: 4px; }
.wm-btn { width: 16px; height: 16px; border-radius: 50%; background: linear-gradient(#77766f, #5b5a54); display: flex; align-items: center; justify-content: center; font-size: 13px; line-height: 1; color: #3c3b37; }
.wm-min::before { content: ""; width: 8px; height: 1px; background: #3c3b37; }
.wm-max::before { content: ""; width: 8px; height: 7px; border: 1px solid #3c3b37; }
.wm-close { background: linear-gradient(#f0703e, #d84a18); }

.statusbar { flex: 0 0 30px; display: flex; align-items: center; background: #775020; border-top: 1px solid #d9d9d9; color: #a8c8dc; font-size: 13.330px; white-space: nowrap; }
.file-menu { align-self: stretch; flex: 0 0 32px; display: flex; align-items: center; padding-left: 7px; margin-left: 1px; background: #d9d9d9; color: #000; border-left: 1px solid #fff; overflow: hidden; }
.status-left { margin-left: 373px; margin-right: auto; }
.status-right { margin-right: 7px; font-size: 13px; }

.workspace { flex: 1; min-height: 0; display: flex; }
.work-left { flex: 1; min-width: 0; display: flex; flex-direction: column; }
.work-top { flex: 1; min-height: 0; display: flex; }
.vscroll { flex: 0 0 21px; display: flex; flex-direction: column; padding: 1px 1px 0 2px; gap: 2px; background: #d9d9d9; border-left: 1px solid #fff; }
.sbtn { flex: 0 0 auto; width: 17px; height: 18px; background: #c8c8c8; border: 1px solid; border-color: #eee #888 #888 #eee; display: flex; align-items: center; justify-content: center; }
.sbtn svg { width: 15px; height: 15px; display: block; }
.vtrough { flex: 1; border: 2px solid #f4f4f4; background: #d9d9d9; padding-top: 6px; }
.vthumb { height: 100%; background: #4682b4; position: relative; }
.vtick { position: absolute; left: 3px; top: 476px; width: 9px; height: 2px; background: #000; }
.canvas { flex: 1; min-width: 0; background: #c8c8c8; overflow: hidden; }
.layout { display: block; shape-rendering: crispEdges; }
.cy { fill: none; stroke: #20dede; stroke-width: 1; }
.shape { stroke: #20dede; stroke-width: 1; }
.cellbox { fill: none; stroke: #fff; stroke-width: 1; }
.bbox { fill: none; stroke: #fff; stroke-width: 2; }
.lbl { font-family: "Liberation Sans", sans-serif; font-size: 18px; fill: #fff; text-anchor: middle; shape-rendering: auto; }

.hscroll { flex: 0 0 20px; display: flex; align-items: center; gap: 2px; padding-left: 3px; background: #d9d9d9; }
.htrough { flex: 1; height: 18px; border: 2px solid #f4f4f4; background: #d9d9d9; border-top-color: #8a8a8a; border-left-color: #8a8a8a; margin-right: 0; }
.hthumb { height: 100%; background: #4682b4; position: relative; }
.htick { position: absolute; left: 840px; top: 3px; width: 2px; height: 8px; background: #000; }

.tiles { flex: 0 0 111px; background: #d9d9d9; padding: 1px 0 0 1px; display: grid; grid-template-columns: repeat(5, 20px); grid-auto-rows: 20px; gap: 2px; align-content: start; }
.t { width: 20px; height: 20px; padding: 0; border: 2px solid; border-color: #efefef #8a8a8a #8a8a8a #efefef; display: block; shape-rendering: crispEdges; }

.cellmgr { position: absolute; left: 95px; top: 55px; width: 415px; height: 290px; background: #d9d9d9; border-radius: 8px 8px 0 0; box-shadow: 0 3px 12px rgba(0,0,0,.4); display: flex; flex-direction: column; overflow: hidden; }
.cm-title { flex: 0 0 30px; position: relative; display: flex; align-items: center; justify-content: center; background: #403f3a; color: #8c8a84; font-family: "Noto Sans", sans-serif; font-weight: 600; font-size: 14.500px; }
.cm-wm { position: absolute; right: 6px; top: 7px; display: flex; gap: 4px; }
.cm-dot { width: 16px; height: 16px; border-radius: 50%; background: #5f5e58; display: flex; align-items: center; justify-content: center; }
.cm-min::before { content: ""; width: 8px; height: 1px; background: #3c3b37; }
.cm-max::before { content: ""; width: 8px; height: 8px; border: 1px solid #3c3b37; }
.cm-x::before { content: ""; width: 8px; height: 8px; background: linear-gradient(45deg, transparent 45%, #3c3b37 45%, #3c3b37 55%, transparent 55%), linear-gradient(-45deg, transparent 45%, #3c3b37 45%, #3c3b37 55%, transparent 55%); }
.cm-tools { flex: 0 0 31px; display: flex; padding: 1px 1px 0; gap: 2px; }
.tk-btn { height: 29px; padding: 0; background: #d9d9d9; border: 1px solid; border-color: #f4f4f4 #888 #888 #f4f4f4; font: 13.330px "DejaVu Sans", sans-serif; color: #000; }
.btn-load { width: 57px; }
.btn-edit { width: 51px; }
.btn-expand { width: 74px; }
.btn-zoom { width: 64px; margin-left: auto; }
.cm-list-wrap { flex: 0 0 202px; display: flex; padding-left: 1px; border-top: 1px solid #aaa; }
.cm-list { flex: 0 0 400px; margin: 0; padding: 0; list-style: none; background: #fff; font-size: 13.250px; color: #000; }
.cm-list li { height: 20px; line-height: 19px; padding-left: 19px; overflow: hidden; white-space: nowrap; width: 100%; clip-path: inset(0 200px 0 0); }
.cm-list li.sel { background: #4a6a8a; color: #d9e4ee; clip-path: none; }
.cm-scroll { flex: 1; display: flex; flex-direction: column; background: #b0b0b0; margin-right: 1px; }
.cm-arrow { width: 12px; height: 12px; margin-left: 1px; flex: none; }
.cm-track { flex: 1; border-bottom: 3px solid #d9d9d9; }
.cm-target { flex: 1; display: flex; align-items: center; padding: 0 0 2px 4px; font-size: 13.330px; color: #000; border-top: 1px solid #eee; }

.help-q { font: 700 32px "DejaVu Sans", sans-serif; fill: #f4f4f4; text-anchor: middle; }
```
